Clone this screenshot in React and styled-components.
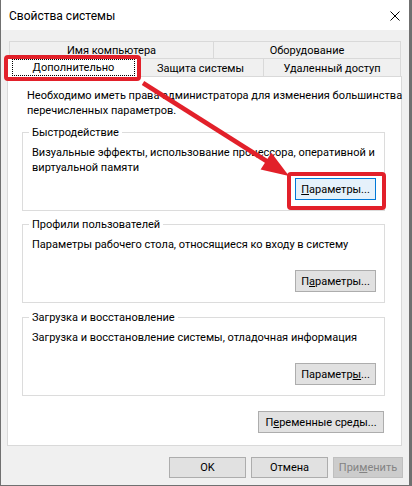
import React from "react";
import styled, { createGlobalStyle, css } from "styled-components";

const GlobalStyle = createGlobalStyle`
  * {
    box-sizing: border-box;
  }
  body {
    margin: 0;
    background: #707070;
    font-family: Roboto, "Noto Sans", Arial, sans-serif;
    font-size: 11px;
    color: #000;
  }
`;

const RED = "#e2202a";

const Window = styled.div`
  position: relative;
  width: 410px;
  height: 486px;
  background: #f0f0f0;
  border: 1px solid #707070;
  border-top: none;
  display: flex;
  flex-direction: column;
`;

const TitleBar = styled.div`
  height: 30px;
  background: #fff;
  display: flex;
  align-items: center;
  justify-content: space-between;
  padding: 1px 9px 0 8px;
  font-size: 12px;
`;

const Body = styled.div`
  padding: 11px 7px 0 6px;
  display: flex;
  flex-direction: column;
`;

const TabRow = styled.div`
  display: flex;
  height: ${(p) => p.$h}px;
  margin: 0 1px 0 2px;
`;

const Tab = styled.div`
  width: ${(p) => p.$w}px;
  flex: none;
  display: flex;
  align-items: center;
  justify-content: center;
  padding-top: ${(p) => p.$pt || 0}px;
  background: #f0f0f0;
  border: 1px solid #d9d9d9;
  border-bottom: none;
  white-space: nowrap;
  & + & {
    margin-left: -1px;
  }
  ${(p) =>
    p.$active &&
    css`
      position: relative;
      z-index: 2;
      background: #fff;
      height: 21px;
      margin: -2px -2px 0 -2px;
      align-self: flex-start;
      align-items: flex-start;
      padding-top: 2px;
    `}
`;

const FocusRing = styled.span`
  width: 123px;
  height: 17px;
  display: flex;
  align-items: center;
  justify-content: center;
  border: 1px dotted #000;
`;

const Panel = styled.div`
  height: 370px;
  background: #fff;
  border: 1px solid #d9d9d9;
  padding: 11px 16px 0 14px;
  display: flex;
  flex-direction: column;
`;

const Text = styled.p`
  margin: 0 0 0 ${(p) => p.$indent || 0}px;
  line-height: 15px;
  white-space: nowrap;
`;

const Group = styled.div`
  position: relative;
  height: 79px;
  margin-top: ${(p) => p.$mt}px;
  border: 1px solid #dcdcdc;
  padding: 12px 8px 10px 9px;
  display: flex;
  flex-direction: column;
  justify-content: space-between;
`;

const Legend = styled.span`
  position: absolute;
  top: -8px;
  left: 6px;
  padding: 0 3px;
  line-height: 15px;
  background: #fff;
`;

const Button = styled.button`
  width: ${(p) => p.$w}px;
  height: ${(p) => p.$h || 22}px;
  flex: none;
  padding: 0;
  font: inherit;
  color: #000;
  background: #e1e1e1;
  border: 1px solid #adadad;
  align-self: ${(p) => p.$align || "auto"};
  u {
    text-decoration: underline;
    text-underline-offset: 1px;
  }
  ${(p) =>
    p.$focused &&
    css`
      background: #e5f1fb;
      border-color: #0078d7;
    `}
  &:disabled {
    background: #cccccc;
    border-color: #bfbfbf;
    color: #838383;
  }
`;

const Footer = styled.div`
  display: flex;
  justify-content: flex-end;
  gap: 5px;
  margin: 11px -1px 0 0;
`;

const Overlay = styled.svg`
  position: absolute;
  left: -1px;
  top: 0;
  pointer-events: none;
  z-index: 10;
`;

function CloseIcon() {
  return (
    <svg width="10" height="10" viewBox="0 0 10 10">
      <path d="M0.5 0.5 L9.5 9.5 M9.5 0.5 L0.5 9.5" stroke="#000" strokeWidth="1" />
    </svg>
  );
}

function Annotations() {
  return (
    <Overlay width="412" height="486" viewBox="0 0 412 486">
      <rect x="6" y="57" width="133" height="22" rx="2" fill="none" stroke={RED} strokeWidth="4" />
      <rect x="289" y="174" width="95" height="34" rx="2" fill="none" stroke={RED} strokeWidth="4" />
      <line x1="143" y1="83" x2="268" y2="162" stroke={RED} strokeWidth="4.5" />
      <polygon points="289,176 260.6,169.6 271.4,152.7" fill={RED} />
    </Overlay>
  );
}

export default function App() {
  return (
    <>
      <GlobalStyle />
      <Window>
        <TitleBar>
          <span>Свойства системы</span>
          <CloseIcon />
        </TitleBar>
        <Body>
          <TabRow $h={17}>
            <Tab $w={205}>Имя компьютера</Tab>
            <Tab $w={188}>Оборудование</Tab>
          </TabRow>
          <TabRow $h={18}>
            <Tab $w={133} $active>
              <FocusRing>Дополнительно</FocusRing>
            </Tab>
            <Tab $w={127} $pt={2}>Защита системы</Tab>
            <Tab $w={138} $pt={2}>Удаленный доступ</Tab>
          </TabRow>
          <Panel>
            <Text $indent={5}>
              Необходимо иметь права администратора для изменения большинства
              <br />
              перечисленных параметров.
            </Text>
            <Group $mt={14}>
              <Legend>Быстродействие</Legend>
              <Text>
                Визуальные эффекты, использование процессора, оперативной и
                <br />
                виртуальной памяти
              </Text>
              <Button $w={81} $align="flex-end" $focused>
                <u>П</u>араметры...
              </Button>
            </Group>
            <Group $mt={13}>
              <Legend>Профили пользователей</Legend>
              <Text>Параметры рабочего стола, относящиеся ко входу в систему</Text>
              <Button $w={81} $align="flex-end">
                П<u>а</u>раметры...
              </Button>
            </Group>
            <Group $mt={14}>
              <Legend>Загрузка и восстановление</Legend>
              <Text>Загрузка и восстановление системы, отладочная информация</Text>
              <Button $w={81} $align="flex-end">
                Параметр<u>ы</u>...
              </Button>
            </Group>
            <Button $w={126} $align="flex-end" style={{ marginTop: 15, marginRight: 1 }}>
              П<u>е</u>ременные среды...
            </Button>
          </Panel>
          <Footer>
            <Button $w={77} $h={21}>OK</Button>
            <Button $w={77} $h={21}>Отмена</Button>
            <Button $w={70} $h={21} disabled>
              При<u>м</u>енить
            </Button>
          </Footer>
        </Body>
        <Annotations />
      </Window>
    </>
  );
}
